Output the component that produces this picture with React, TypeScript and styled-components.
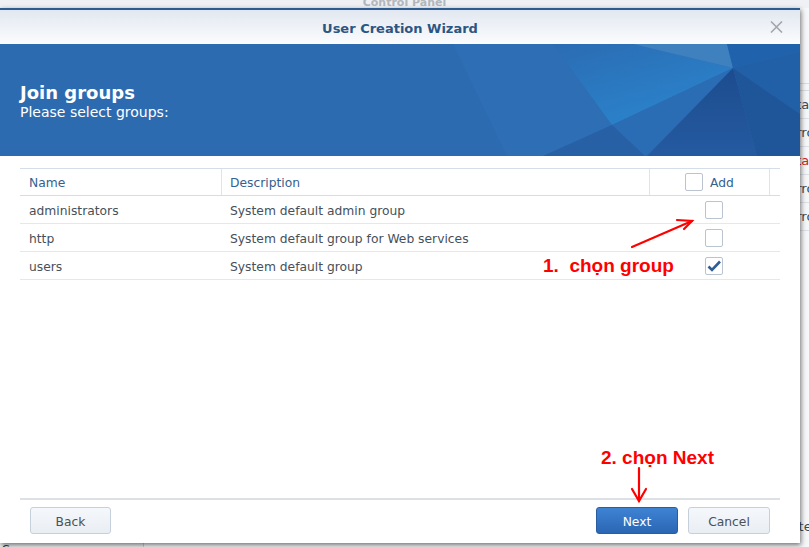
import React from "react";
import styled, { createGlobalStyle } from "styled-components";

const Global = createGlobalStyle`
  html, body { margin: 0; padding: 0; }
  body {
    width: 809px; height: 547px; overflow: hidden;
    font-family: "DejaVu Sans", Verdana, sans-serif;
    background: #f3f4f6;
  }
`;

const Page = styled.div`
  position: relative;
  width: 809px;
  height: 547px;
  overflow: hidden;
`;

/* ---------- background window (Control Panel) ---------- */
const Backdrop = styled.div`
  display: flex;
  flex-direction: column;
  width: 100%;
  height: 100%;
`;
const BgTitle = styled.div`
  height: 8px;
  overflow: hidden;
  text-align: center;
  font-size: 11px;
  font-weight: bold;
  line-height: 11px;
  color: #b3b7bd;
  background: #eff1f4;
  span { display: block; margin-top: -3px; }
`;
const BgBody = styled.div`
  flex: 1;
  display: flex;
  background: #f6f7f9;
  min-height: 0;
`;
const BgSide = styled.div`
  width: 143px;
  flex-shrink: 0;
  border-right: 1px solid #c9cdd2;
  background: #eef0f3;
  display: flex;
  flex-direction: column;
  justify-content: flex-end;
  overflow: hidden;
`;
const BgSideItem = styled.div`
  font-size: 13px;
  line-height: 16px;
  color: #3c3f44;
  padding-left: 2px;
  margin-bottom: -11px;
`;
const BgMain = styled.div`
  flex: 1;
  min-width: 0;
  overflow: hidden;
  padding: 75px 0 0 0;
  display: flex;
  flex-direction: column;
`;
const BgHeadLine = styled.div`
  height: 6px;
  flex-shrink: 0;
  border-top: 1px solid #d9dde2;
  border-bottom: 1px solid #d9dde2;
`;
const BgRow = styled.div<{ $red?: boolean }>`
  height: 28px;
  flex-shrink: 0;
  box-sizing: border-box;
  border-bottom: 1px solid #dde1e6;
  display: flex;
  align-items: center;
  padding-left: 644px;
  font-size: 13px;
  color: ${(p) => (p.$red ? "#d0261d" : "#3a4a5c")};
  white-space: nowrap;
`;
const BgFoot = styled.div`
  margin-top: auto;
  margin-bottom: 13px;
  padding-left: 625px;
  font-size: 13px;
  color: #3a4a5c;
  white-space: nowrap;
`;

/* ---------- dialog ---------- */
const Dialog = styled.div`
  position: absolute;
  left: 0;
  top: 8px;
  width: 800px;
  height: 535px;
  background: #fff;
  display: flex;
  flex-direction: column;
  box-shadow: 1px 2px 5px rgba(0, 0, 0, 0.55);
`;
const TopStripe = styled.div`
  height: 2px;
  background: #2e5b90;
`;
const TitleBar = styled.div`
  height: 34px;
  display: grid;
  grid-template-columns: 1fr auto 1fr;
  align-items: center;
  background: linear-gradient(#e2e8f1, #fbfcfd);
`;
const Title = styled.div`
  grid-column: 2;
  padding-top: 2px;
  font-size: 13px;
  font-weight: bold;
  color: #2b5584;
`;
const CloseBtn = styled.div`
  grid-column: 3;
  justify-self: end;
  margin-right: 17px;
  width: 14px;
  height: 14px;
  display: flex;
  align-items: center;
  justify-content: center;
`;
const Banner = styled.div`
  position: relative;
  height: 112px;
  box-sizing: border-box;
  padding: 39px 20px 0;
  background: #2d6bb1;
  color: #fff;
  overflow: hidden;
`;
const BannerArt = styled.svg`
  position: absolute;
  left: 0;
  top: 0;
  width: 800px;
  height: 112px;
`;
const BannerText = styled.div`
  position: relative;
`;
const BannerHeading = styled.div`
  font-size: 18px;
  font-weight: bold;
  line-height: 20px;
`;
const BannerSub = styled.div`
  font-size: 14px;
  line-height: 18px;
`;
const Body = styled.div`
  flex: 1;
  padding: 12px 20px 0;
`;
const HeaderRow = styled.div`
  display: grid;
  grid-template-columns: 202px 428px 120px 1fr;
  height: 28px;
  box-sizing: border-box;
  border-top: 1px solid #d5dee8;
  border-bottom: 1px solid #d5dee8;
`;
const HeaderCell = styled.div<{ $center?: boolean; $pad?: number }>`
  display: flex;
  align-items: center;
  justify-content: ${(p) => (p.$center ? "center" : "flex-start")};
  gap: 7px;
  padding-left: ${(p) => p.$pad ?? 0}px;
  border-right: 1px solid #dde4ec;
  font-size: 12.3px;
  color: #34618f;
  span { padding-top: 2px; }
  &:last-child { border-right: none; }
`;
const Row = styled.div`
  display: grid;
  grid-template-columns: 202px 428px 120px;
  height: 28px;
  box-sizing: border-box;
  border-bottom: 1px solid #e3e8ee;
`;
const Cell = styled.div<{ $pad?: number; $center?: boolean }>`
  display: flex;
  align-items: center;
  justify-content: ${(p) => (p.$center ? "center" : "flex-start")};
  padding-left: ${(p) => p.$pad ?? 0}px;
  font-size: 12.3px;
  color: #47505a;
  span { padding-top: 2px; }
`;
const Box = styled.div<{ $checked?: boolean }>`
  width: 18px;
  height: 18px;
  box-sizing: border-box;
  border: 1px solid #b9c4d0;
  border-radius: 2px;
  background: #fff;
  display: flex;
  align-items: center;
  justify-content: center;
`;
const Footer = styled.div`
  margin: 0 20px;
  border-top: 2px solid #dde1e6;
  padding: 7px 10px 9px;
  display: flex;
  gap: 10px;
`;
const Spacer = styled.div`
  flex: 1;
`;
const Button = styled.button<{ $primary?: boolean; $w?: number }>`
  width: ${(p) => p.$w ?? 82}px;
  height: 27px;
  box-sizing: border-box;
  border-radius: 3px;
  font-family: "DejaVu Sans", Verdana, sans-serif;
  font-size: 12.3px;
  padding: 2px 0 0;
  cursor: pointer;
  border: 1px solid ${(p) => (p.$primary ? "#2a5d9f" : "#c6d0db")};
  background: ${(p) =>
    p.$primary
      ? "linear-gradient(#3f83d4, #2a66b3)"
      : "linear-gradient(#f5f8fb, #e9eef4)"};
  color: ${(p) => (p.$primary ? "#fff" : "#4b5159")};
`;

/* ---------- annotations ---------- */
const Overlay = styled.svg`
  position: absolute;
  left: 0;
  top: 0;
  width: 809px;
  height: 547px;
  pointer-events: none;
`;
const Note = styled.div<{ $x: number; $y: number }>`
  position: absolute;
  left: ${(p) => p.$x}px;
  top: ${(p) => p.$y}px;
  font-family: "Liberation Sans", Arial, sans-serif;
  font-weight: bold;
  font-size: 19px;
  line-height: 22px;
  color: #ff0000;
  white-space: pre;
`;

const Check = ({ checked }: { checked?: boolean }) => (
  <Box $checked={checked}>
    {checked && (
      <svg width="16" height="16" viewBox="0 0 16 16">
        <polyline
          points="2.5,8.5 6,12 14,3.5"
          fill="none"
          stroke="#2f5e95"
          strokeWidth="2.6"
        />
      </svg>
    )}
  </Box>
);

const groups = [
  { name: "administrators", desc: "System default admin group", checked: false },
  { name: "http", desc: "System default group for Web services", checked: false },
  { name: "users", desc: "System default group", checked: true },
];

export default function App() {
  return (
    <Page>
      <Global />
      <Backdrop>
        <BgTitle>
          <span>Control Panel</span>
        </BgTitle>
        <BgBody>
          <BgSide>
            <BgSideItem>Server</BgSideItem>
          </BgSide>
          <BgMain>
            <BgHeadLine />
            <BgRow>Status</BgRow>
            <BgRow>Error</BgRow>
            <BgRow $red>Stable</BgRow>
            <BgRow>Error</BgRow>
            <BgRow>Error</BgRow>
            <BgFoot>Delete</BgFoot>
          </BgMain>
        </BgBody>
      </Backdrop>

      <Dialog>
        <TopStripe />
        <TitleBar>
          <Title>User Creation Wizard</Title>
          <CloseBtn>
            <svg width="13" height="12" viewBox="0 0 13 12">
              <path d="M1 0.5 L12 11.5 M12 0.5 L1 11.5" stroke="#a3a7ac" strokeWidth="1.6" />
            </svg>
          </CloseBtn>
        </TitleBar>
        <Banner>
          <BannerArt viewBox="0 0 800 112" preserveAspectRatio="none">
            <defs>
              <linearGradient id="lightB" x1="0" y1="0" x2="0.6" y2="1">
                <stop offset="0" stopColor="#2b6cb3" />
                <stop offset="1" stopColor="#2a84cc" />
              </linearGradient>
              <linearGradient id="darkA" x1="0" y1="0" x2="0" y2="1">
                <stop offset="0" stopColor="#1c4c8e" />
                <stop offset="1" stopColor="#255aa1" />
              </linearGradient>
            </defs>
            <polygon points="453,0 553,0 612,81 543,112 507,112" fill="#2e6eb4" />
            <polygon points="553,0 633,0 733,24 612,81" fill="url(#lightB)" />
            <polygon points="633,0 727,0 733,24" fill="#3f80bf" />
            <polygon points="727,0 800,0 800,8 733,24" fill="#2063ac" />
            <polygon points="612,81 733,24 645,112" fill="#2a6db5" />
            <polygon points="543,112 612,81 645,112" fill="#2860a6" />
            <polygon points="733,24 757,112 647,112" fill="url(#darkA)" />
            <polygon points="733,24 800,8 800,70" fill="#215fa7" />
            <polygon points="733,24 800,70 800,112 757,112" fill="#1f5599" />
          </BannerArt>
          <BannerText>
            <BannerHeading>Join groups</BannerHeading>
            <BannerSub>Please select groups:</BannerSub>
          </BannerText>
        </Banner>
        <Body>
          <HeaderRow>
            <HeaderCell $pad={9}><span>Name</span></HeaderCell>
            <HeaderCell $pad={8}><span>Description</span></HeaderCell>
            <HeaderCell $center>
              <Check />
              <span>Add</span>
            </HeaderCell>
            <HeaderCell />
          </HeaderRow>
          {groups.map((g) => (
            <Row key={g.name}>
              <Cell $pad={9}><span>{g.name}</span></Cell>
              <Cell $pad={8}><span>{g.desc}</span></Cell>
              <Cell $center $pad={7}>
                <Check checked={g.checked} />
              </Cell>
            </Row>
          ))}
        </Body>
        <Footer>
          <Button $w={81}>Back</Button>
          <Spacer />
          <Button $primary>Next</Button>
          <Button>Cancel</Button>
        </Footer>
      </Dialog>

      <Overlay viewBox="0 0 809 547">
        <g stroke="#ff0000" strokeWidth="2.2" fill="none" strokeLinecap="round">
          <path d="M632 247 L692 221" />
          <path d="M677 220 L692 221 L684 229" />
          <path d="M639 468 L639 501" />
          <path d="M632 489 L639 501 L646 489" />
        </g>
      </Overlay>
      <Note $x={543} $y={255}>{"1.  chọn group"}</Note>
      <Note $x={601} $y={447}>2. chọn Next</Note>
    </Page>
  );
}
